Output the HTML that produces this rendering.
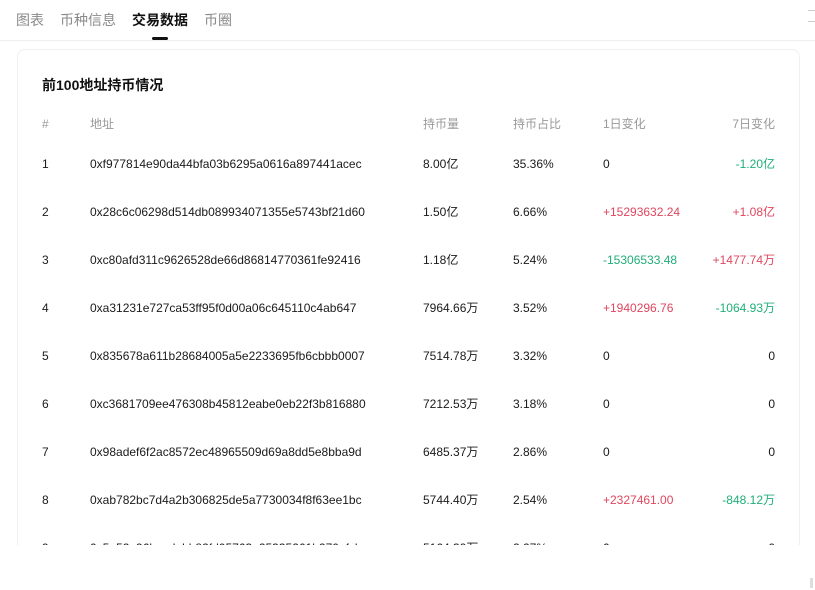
<!DOCTYPE html>
<html><head><meta charset="utf-8"><style>
body{margin:0;width:815px;height:590px;background:#fff;font-family:"Liberation Sans","Noto Sans CJK SC",sans-serif;position:relative;overflow:hidden;color:#1a1a1a}
.t{position:absolute;white-space:nowrap}
.tab{position:absolute;top:10px;font-size:14px;color:#8a8a8a;line-height:20px}
.card{position:absolute;left:17px;top:49px;width:781px;height:495px;border:1px solid #f0f0f0;border-bottom:none;border-radius:8px 8px 0 0;overflow:hidden}
.r{position:absolute;left:0;width:781px;font-size:12px;height:16px;line-height:16px}
.r span{position:absolute;top:0;white-space:nowrap;line-height:16px;height:16px}
.h{color:#999}
.red{color:#e0465e}.grn{color:#1fae7a}
</style></head><body>
<div class="tab" style="left:16px">图表</div>
<div class="tab" style="left:60px">币种信息</div>
<div class="tab" style="left:132px;color:#111;font-weight:bold">交易数据</div>
<div class="tab" style="left:204px">币圈</div>
<div style="position:absolute;left:152px;top:37px;width:16px;height:3px;background:#111;border-radius:2px"></div>
<div style="position:absolute;left:0;top:40px;width:815px;height:1px;background:#eee"></div>
<div style="position:absolute;left:808px;top:10px;width:7px;height:10px;border-top:1px solid #ccc;border-bottom:1px solid #ccc"></div>
<div class="card">
<div class="t" style="left:24px;top:25px;font-size:14px;font-weight:bold;color:#111;line-height:20px">前100地址持币情况</div>
<div class="r h" style="top:66px"><span style="left:24px">#</span><span style="left:72px">地址</span><span style="left:405px">持币量</span><span style="left:495px">持币占比</span><span style="left:585px">1日变化</span><span style="right:24px">7日变化</span></div>
<div class="r" style="top:106px"><span style="left:24px">1</span><span style="left:72px">0xf977814e90da44bfa03b6295a0616a897441acec</span><span style="left:405px">8.00亿</span><span style="left:495px">35.36%</span><span style="left:585px">0</span><span class="grn" style="right:24px">-1.20亿</span></div>
<div class="r" style="top:154px"><span style="left:24px">2</span><span style="left:72px">0x28c6c06298d514db089934071355e5743bf21d60</span><span style="left:405px">1.50亿</span><span style="left:495px">6.66%</span><span class="red" style="left:585px">+15293632.24</span><span class="red" style="right:24px">+1.08亿</span></div>
<div class="r" style="top:202px"><span style="left:24px">3</span><span style="left:72px">0xc80afd311c9626528de66d86814770361fe92416</span><span style="left:405px">1.18亿</span><span style="left:495px">5.24%</span><span class="grn" style="left:585px">-15306533.48</span><span class="red" style="right:24px">+1477.74万</span></div>
<div class="r" style="top:250px"><span style="left:24px">4</span><span style="left:72px">0xa31231e727ca53ff95f0d00a06c645110c4ab647</span><span style="left:405px">7964.66万</span><span style="left:495px">3.52%</span><span class="red" style="left:585px">+1940296.76</span><span class="grn" style="right:24px">-1064.93万</span></div>
<div class="r" style="top:298px"><span style="left:24px">5</span><span style="left:72px">0x835678a611b28684005a5e2233695fb6cbbb0007</span><span style="left:405px">7514.78万</span><span style="left:495px">3.32%</span><span style="left:585px">0</span><span style="right:24px">0</span></div>
<div class="r" style="top:346px"><span style="left:24px">6</span><span style="left:72px">0xc3681709ee476308b45812eabe0eb22f3b816880</span><span style="left:405px">7212.53万</span><span style="left:495px">3.18%</span><span style="left:585px">0</span><span style="right:24px">0</span></div>
<div class="r" style="top:394px"><span style="left:24px">7</span><span style="left:72px">0x98adef6f2ac8572ec48965509d69a8dd5e8bba9d</span><span style="left:405px">6485.37万</span><span style="left:495px">2.86%</span><span style="left:585px">0</span><span style="right:24px">0</span></div>
<div class="r" style="top:442px"><span style="left:24px">8</span><span style="left:72px">0xab782bc7d4a2b306825de5a7730034f8f63ee1bc</span><span style="left:405px">5744.40万</span><span style="left:495px">2.54%</span><span class="red" style="left:585px">+2327461.00</span><span class="grn" style="right:24px">-848.12万</span></div>
<div class="r" style="top:490px"><span style="left:24px">9</span><span style="left:72px">0x5a52e96bacdabb82fd05763e25335261b270efcb</span><span style="left:405px">5164.39万</span><span style="left:495px">2.27%</span><span style="left:585px">0</span><span style="right:24px">0</span></div>
</div>
<div style="position:absolute;left:810px;top:578px;width:3px;height:10px;background:#ddd"></div>
</body></html>
